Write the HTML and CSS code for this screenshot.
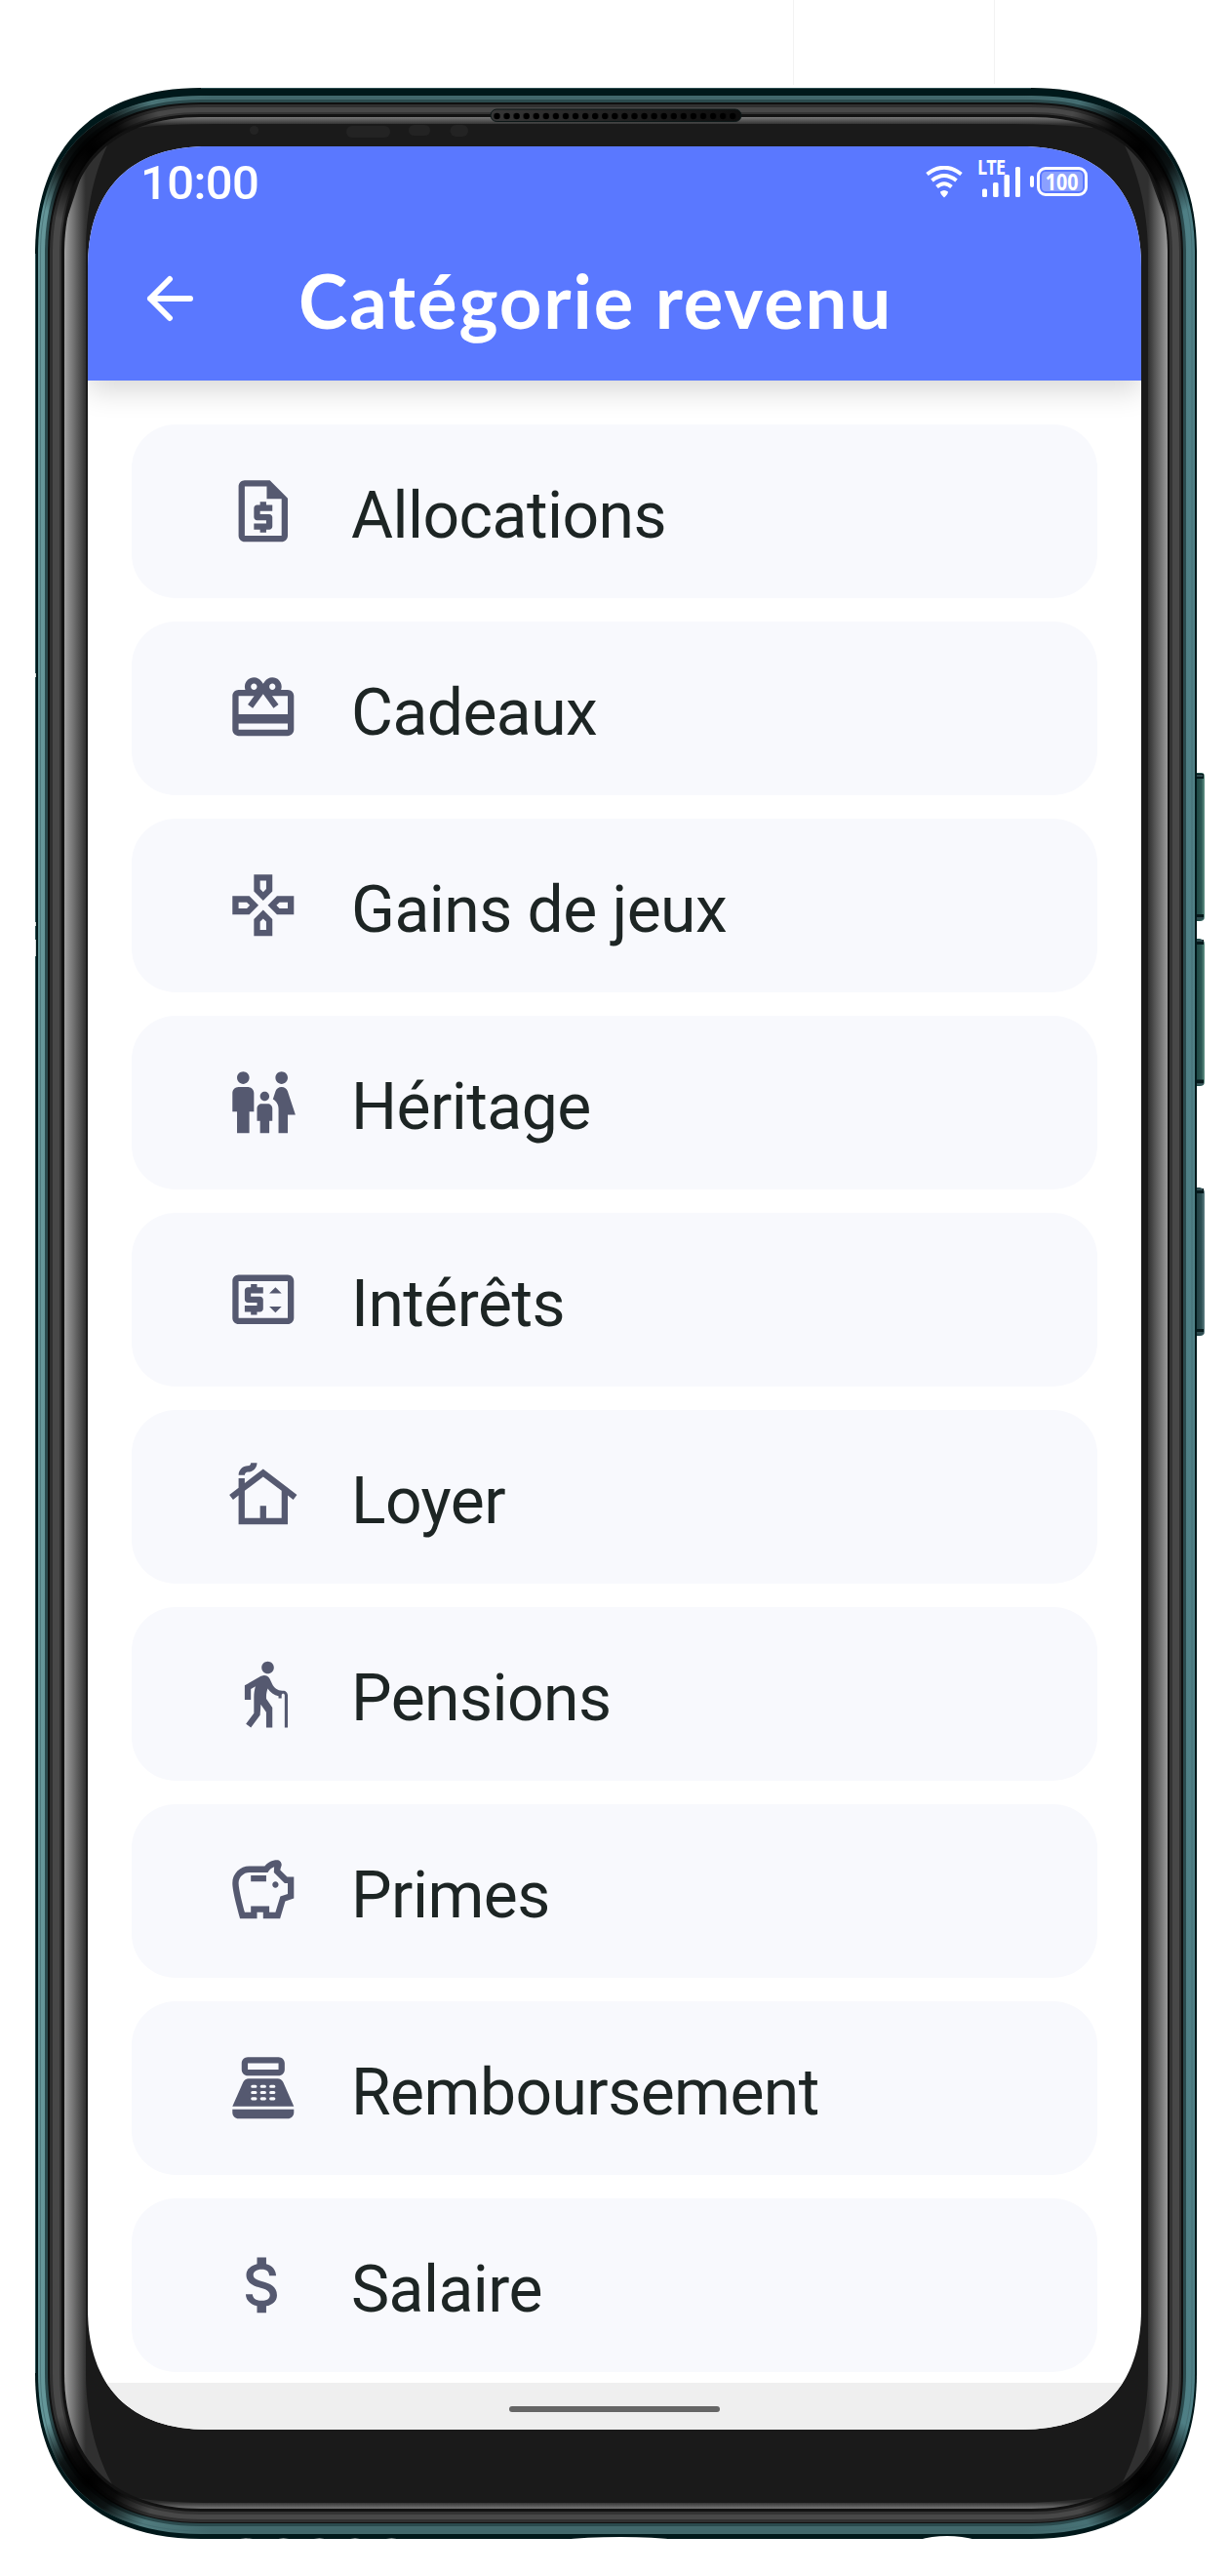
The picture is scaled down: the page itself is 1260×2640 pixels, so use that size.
FILE: index.html
```html
<!DOCTYPE html>
<html lang="fr">
<head>
<meta charset="utf-8">
<title>Catégorie revenu</title>
<link rel="stylesheet" href="styles.css">
</head>
<body>
<div class="stage">
  <svg class="device" viewBox="0 0 1260 2640" aria-hidden="true">
    <defs>
      <linearGradient id="tealX" x1="0" x2="1"><stop offset="0" stop-color="#65979a"/><stop offset=".15" stop-color="#42686b"/><stop offset=".85" stop-color="#42686b"/><stop offset="1" stop-color="#4f8086"/></linearGradient>
      <linearGradient id="glassL" gradientUnits="userSpaceOnUse" x1="66" x2="88" y1="0" y2="0"><stop offset="0" stop-color="#a2a2a2"/><stop offset="1" stop-color="#303030"/></linearGradient>
      <linearGradient id="glassR" gradientUnits="userSpaceOnUse" x1="1177" x2="1198" y1="0" y2="0"><stop offset="0" stop-color="#303030"/><stop offset="1" stop-color="#a0a0a0"/></linearGradient>
      <linearGradient id="glassT" gradientUnits="userSpaceOnUse" x1="0" x2="0" y1="120" y2="128"><stop offset="0" stop-color="#777"/><stop offset="1" stop-color="#2b2b2b"/></linearGradient>
      <linearGradient id="glassB" gradientUnits="userSpaceOnUse" x1="0" x2="0" y1="2564" y2="2571"><stop offset="0" stop-color="#2b2b2b"/><stop offset="1" stop-color="#777"/></linearGradient>
      <linearGradient id="speaker" x1="0" x2="1"><stop offset="0" stop-color="#363636"/><stop offset="1" stop-color="#0d0d0d"/></linearGradient>
      <linearGradient id="keyA" x1="0" x2="1"><stop offset="0" stop-color="#1c4542"/><stop offset=".65" stop-color="#2c5954"/><stop offset="1" stop-color="#67978a"/></linearGradient>
      <linearGradient id="keyB" x1="0" x2="1"><stop offset="0" stop-color="#203d40"/><stop offset=".65" stop-color="#2d5054"/><stop offset="1" stop-color="#648387"/></linearGradient>
      <radialGradient id="shade"><stop offset="0" stop-color="#000"/><stop offset=".45" stop-color="#000" stop-opacity=".85"/><stop offset="1" stop-color="#000" stop-opacity="0"/></radialGradient>
      <clipPath id="bodyClip"><path d="M39 260C39 156 99 98 206 98H1057C1165 98 1225 156 1225 260V2432C1225 2538 1165 2597 1057 2597H206C99 2597 39 2538 39 2432Z"/></clipPath>
      <clipPath id="glassClip"><path d="M66 260C66 170 116 120 206 120H1057C1147 120 1197 170 1197 260V2432C1197 2521 1147 2571 1057 2571H206C116 2571 66 2521 66 2432Z"/></clipPath>
      <pattern id="holes" patternUnits="userSpaceOnUse" x="504.5" y="114" width="10.07" height="10"><circle cx="5" cy="5" r="3.2" fill="#000"/></pattern>
    </defs>
    <path d="M813.5 0V87M1019.5 0V86" stroke="#f3f3f3"/>
    <!-- side keys -->
    <g stroke="#071a1c" stroke-width="1">
      <path d="M1226 792H1232Q1235 792 1235 796V940Q1235 944 1230 944H1226Z" fill="url(#keyA)" stroke="none"/>
      <path d="M1226 962H1230Q1235 963 1235 967V1109Q1235 1113 1230 1113H1226Z" fill="url(#keyA)" stroke="none"/>
      <path d="M1226 1217H1230Q1235 1218 1235 1222V1365Q1235 1369 1230 1369H1226Z" fill="url(#keyB)" stroke="none"/>
      <path d="M1227 795.500H1234M1227 939.500H1234M1227 965.500H1234M1227 1109H1234M1227 1220.500H1234M1227 1364.500H1234" stroke-width="5"/>
      <path d="M1227 795H1233M1227 941H1234M1227 964H1233M1227 1111H1234M1227 1219H1233M1227 1366H1234" stroke="#5a7c83"/>
    </g>
    <!-- metal body -->
    <path d="M36 260C36 151 97 90 206 90H1057C1166 90 1227 151 1227 260V2432C1227 2541 1166 2602 1057 2602H206C97 2602 36 2541 36 2432Z" fill="#00181a"/>
    <path d="M36.500 2432V260M206 90.500H1057" stroke="#2f5053"/>
    <path d="M36.500 690V694M36.500 945V949M36.500 963V980" stroke="#d5dada"/>
    <path d="M39 260C39 156 99 98 206 98H1057C1165 98 1225 156 1225 260V2432C1225 2538 1165 2597 1057 2597H206C99 2597 39 2538 39 2432Z" fill="url(#tealX)"/>
    <path d="M41.500 260C41.500 158 101 100 206 100H1057C1163 100 1222 158 1222 260V2432C1222 2536 1163 2594 1057 2594H206C101 2594 41.500 2536 41.500 2432Z" fill="none" stroke="#3f666a" stroke-opacity=".6"/>
    <path d="M46 260C46 159 103 102 206 102H1057C1158 102 1216 159 1216 260V2432C1216 2532 1158 2589 1057 2589H206C103 2589 46 2532 46 2432Z" fill="#2b4a4d"/>
    <path d="M49 260C49 161 106 105 206 105H1057C1156 105 1213 161 1213 260V2432C1213 2530 1156 2586 1057 2586H206C106 2586 49 2530 49 2432Z" fill="#101010"/>
    <path d="M51 260C51 163 107 107 206 107H1057C1155 107 1211 163 1211 260V2432C1211 2529 1155 2585 1057 2585H206C107 2585 51 2529 51 2432Z" fill="#303030"/>
    <path d="M54 260C54 164 109 110 206 110H1057C1153 110 1209 164 1209 260V2432C1209 2527 1153 2582 1057 2582H206C109 2582 54 2527 54 2432Z" fill="#484848"/>
    <path d="M61 260C61 167 113 115 206 115H1057C1150 115 1202 167 1202 260V2432C1202 2525 1150 2577 1057 2577H206C113 2577 61 2525 61 2432Z" fill="#333"/>
    <g clip-path="url(#bodyClip)" fill="url(#shade)">
      <circle cx="94" cy="154" r="78"/><circle cx="1168" cy="154" r="78"/>
      <circle cx="90" cy="2542" r="72"/><circle cx="1172" cy="2542" r="72"/>
    </g>
    <path d="M63 260C63 168 114 117 206 117H1057C1149 117 1199 168 1199 260V2432C1199 2523 1149 2574 1057 2574H206C114 2574 63 2523 63 2432Z" fill="#121212"/>
    <!-- front glass and its reflections -->
    <g clip-path="url(#glassClip)">
      <path d="M60 110H1200V2580H60Z" fill="#1a1a1a"/>
      <path d="M120 110H1140L1120 131Q1080 127 1040 127H220Q170 127 140 131Z" fill="url(#glassT)"/>
      <path d="M120 2580H1140L1120 2560Q1080 2565 1040 2565H220Q170 2565 140 2560Z" fill="url(#glassB)"/>
      <path d="M60 2440V250L100 130L114 141C96 175 88 215 88 260V2432C88 2475 98 2515 115 2546L90 2560Z" fill="url(#glassL)"/>
      <path d="M1204 2440V250L1160 130L1149 141C1167 175 1177 215 1177 260V2432C1177 2475 1167 2515 1148 2549L1172 2560Z" fill="url(#glassR)"/>
    </g>
    <g fill="#232323"><circle cx="260.500" cy="133.500" r="4.600"/><rect x="355" y="129" width="45" height="12" rx="6"/><rect x="419" y="128" width="22" height="11" rx="5.500"/><rect x="461.500" y="128" width="18.500" height="12" rx="6"/></g>
    <rect x="503" y="112" width="257" height="12.500" rx="6.200" fill="url(#speaker)" stroke="#0c1717"/>
    <rect x="504.500" y="114" width="251.700" height="10" fill="url(#holes)"/>
    <g fill="#fff"><path d="M942 2603Q955 2599 971 2599Q986 2599 1001 2603Z"/><path d="M575 2603Q600 2600 636 2600Q670 2600 695 2603Z"/><path d="M240 2603Q252 2600 264 2603ZM280 2603Q290 2600 302 2603ZM316 2603Q328 2600 338 2603ZM354 2603Q364 2600 374 2603ZM390 2603Q402 2600 412 2603Z"/></g>
  </svg>

  <div class="screen">
    <div class="statusbar">
      <span class="clock">10:00</span>
      <div class="signals">
        <svg class="wifi" viewBox="0 0 38 34" fill="none" stroke="#fff" stroke-width="4">
          <path d="M1.500 8.500Q19-5 36.500 8.500M6.500 15Q19 5 31.500 15M11.500 21.500Q19 15 26.500 21.500"/>
          <path d="M15 26.500Q19 23.500 23 26.500Q23 29 19 32.500Q15 29 15 26.500Z" fill="#fff" stroke="none"/>
        </svg>
        <div class="network">
          <svg class="bars" viewBox="0 0 40 31" fill="#fff"><rect y="22.500" width="5" height="8.500" rx="1.500"/><rect x="11" y="16" width="5.500" height="15" rx="1.500"/><rect x="22.500" y="8" width="5.500" height="23" rx="1.500"/><rect x="34" width="5" height="31" rx="1.500"/></svg>
          <span class="lte">LTE</span>
        </div>
        <div class="battery"><span class="nub"></span><span class="cell"><span class="charge"><span class="level">100</span></span></span></div>
      </div>
    </div>
    <header class="appbar">
      <svg class="back" viewBox="0 0 48 48" fill="none" stroke="#fff" stroke-width="6" stroke-linecap="round" stroke-linejoin="round"><path d="M45 24H4M24 4L4 24L24 44"/></svg>
      <h1 class="title">Catégorie revenu</h1>
    </header>

    <main class="list">
      <div class="row"><svg class="icon" viewBox="0 0 24 24"><path d="M14.170 2H6c-1.100 0-2 .9-2 2v16c0 1.100.89 2 2 2h12c1.110 0 2-.9 2-2V7.830L14.170 2zM6 20V4h7.170v4H18v12H6zm5-1h2v-1h1c.55 0 1-.45 1-1v-3c0-.55-.45-1-1-1h-3v-1h4v-2h-2V9h-2v1h-1c-.55 0-1 .45-1 1v3c0 .55.45 1 1 1h3v1H9v2h2v1z"/></svg><span class="label">Allocations</span></div>
      <div class="row"><svg class="icon" viewBox="0 0 24 24"><path d="M20 6h-2.180c.11-.31.18-.65.18-1 0-1.660-1.340-3-3-3-1.050 0-1.960.54-2.500 1.350l-.5.67-.5-.68C10.960 2.540 10.050 2 9 2 7.340 2 6 3.340 6 5c0 .35.07.69.18 1H4c-1.110 0-1.990.89-1.990 2L2 19c0 1.110.89 2 2 2h16c1.110 0 2-.89 2-2V8c0-1.110-.89-2-2-2zm-5-2c.55 0 1 .45 1 1s-.45 1-1 1-1-.45-1-1 .45-1 1-1zM9 4c.55 0 1 .45 1 1s-.45 1-1 1-1-.45-1-1 .45-1 1-1zm11 15H4v-2h16v2zm0-5H4V8h5.080L7 10.830 8.620 12 11 8.760l1-1.360 1 1.360L15.380 12 17 10.830 14.920 8H20v6z"/></svg><span class="label">Cadeaux</span></div>
      <div class="row"><svg class="icon" viewBox="0 0 24 24"><path d="M13 4v2.670l-1 1-1-1V4h2m7 7v2h-2.670l-1-1 1-1H20M6.670 11l1 1-1 1H4v-2h2.670M12 16.330l1 1V20h-2v-2.670l1-1M15 2H9v5.500l3 3 3-3V2zm7 7h-5.500l-3 3 3 3H22V9zM7.500 9H2v6h5.500l3-3-3-3zm4.500 4.500l-3 3V22h6v-5.500l-3-3z"/></svg><span class="label">Gains de jeux</span></div>
      <div class="row"><svg class="icon" viewBox="0 0 24 24"><path d="M16 4c0-1.110.89-2 2-2s2 .89 2 2-.89 2-2 2-2-.89-2-2zm4 18v-6h2.500l-2.540-7.630C19.680 7.550 18.920 7 18.060 7h-.12c-.86 0-1.630.55-1.900 1.370l-.86 2.580c1.080.6 1.820 1.730 1.820 3.050v8h3zm-7.500-10.500c.83 0 1.500-.67 1.500-1.500s-.67-1.500-1.500-1.500S11 9.170 11 10s.67 1.500 1.500 1.500zM5.500 6c1.110 0 2-.89 2-2s-.89-2-2-2-2 .89-2 2 .89 2 2 2zm2 16v-7H9V9c0-1.100-.9-2-2-2H4c-1.100 0-2 .9-2 2v6h1.500v7h4zm6.500 0v-4h1v-4c0-.82-.68-1.500-1.500-1.500h-2c-.82 0-1.500.68-1.500 1.500v4h1v4h3z"/></svg><span class="label">Héritage</span></div>
      <div class="row"><svg class="icon" viewBox="0 0 24 24"><path d="M20 4H4c-1.110 0-1.990.89-1.990 2L2 18c0 1.110.89 2 2 2h16c1.110 0 2-.89 2-2V6c0-1.110-.89-2-2-2zm0 14H4V6h16v12zM6 16h2v1h2v-1h1c.55 0 1-.45 1-1v-3c0-.55-.45-1-1-1H8v-1h4V8h-2V7H8v1H7c-.55 0-1 .45-1 1v3c0 .55.45 1 1 1h3v1H6v2zm10-8l-2 2h4zm-2 6.250l2 2 2-2z"/></svg><span class="label">Intérêts</span></div>
      <div class="row"><svg class="icon" viewBox="0 0 24 24"><path d="M12 3L6 7.580V6H4v3.110L1 11.400l1.210 1.590L4 11.620V21h16v-9.380l1.790 1.360L23 11.400 12 3zm6 16h-5v-4h-2v4H6v-8.900l6-4.580 6 4.580V19zM10 1c0 1.660-1.340 3-3 3-.55 0-1 .45-1 1H4c0-1.660 1.340-3 3-3 .55 0 1-.45 1-1h2z"/></svg><span class="label">Loyer</span></div>
      <div class="row"><svg class="icon" viewBox="0 0 24 24"><path d="M13.500 5.500c1.100 0 2-.9 2-2s-.9-2-2-2-2 .9-2 2 .9 2 2 2zM20 12.500V23h-1V12.500c0-.28-.22-.5-.5-.5s-.5.22-.5.5v1h-1v-.69c-1.460-.38-2.700-1.290-3.510-2.520-.31.87-.49 1.780-.49 2.710 0 .23.020.46.030.69L15 16.500V23h-2v-5l-1.780-2.540L11 19l-3 4-1.600-1.200L9 18.330V13c0-1.150.18-2.290.5-3.390L8 10.460V14H6V9.300l5.400-3.070v.01c.59-.31 1.320-.33 1.940.03.36.21.63.51.8.85l.79 1.670c.58 1.230 1.820 2.210 3.270 2.210h.3c.83 0 1.500.67 1.500 1.500z"/></svg><span class="label">Pensions</span></div>
      <div class="row"><svg class="icon" viewBox="0 0 24 24"><path fill-rule="evenodd" d="M19.830 7.500l-2.270-2.270c.07-.42.18-.81.32-1.150.08-.18.12-.37.12-.58 0-.83-.67-1.500-1.500-1.500-1.640 0-3.090.79-4 2h-5C4.460 4 2 6.460 2 9.500S4.500 21 4.500 21H10v-2h2v2h5.500l1.680-5.590 2.820-.94V7.500h-2.170zM20 13.030l-2.410.8L16.010 19H14v-2H8v2H6.010C5.400 16.770 4 11.480 4 9.500 4 7.570 5.570 6 7.500 6h6c.4-.8 1.150-1.450 2.100-1.800-.05.6-.1 1.250-.1 1.850L19 9.500h1v3.530zM13 9H8V7h5v2zM16 11c-.55 0-1-.45-1-1s.45-1 1-1 1 .45 1 1-.45 1-1 1z"/></svg><span class="label">Primes</span></div>
      <div class="row"><svg class="icon" viewBox="0 0 24 24"><path d="M17 2H7c-1.100 0-2 .9-2 2v2c0 1.100.9 2 2 2h10c1.100 0 2-.9 2-2V4c0-1.100-.9-2-2-2zm0 4H7V4h10v2zm3 16H4c-1.100 0-2-.9-2-2v-1h20v1c0 1.100-.9 2-2 2zM18.530 10.190C18.210 9.470 17.490 9 16.700 9H7.300c-.79 0-1.510.47-1.830 1.190L2 18h20z"/><path class="keys" d="M8.500 11.500h1m2 0h1m2 0h1M8.500 13.500h1m2 0h1m2 0h1M8.500 15.500h1m2 0h1m2 0h1"/></svg><span class="label">Remboursement</span></div>
      <div class="row"><svg class="icon" viewBox="0 0 24 24"><path d="M11.800 10.900c-2.270-.59-3-1.200-3-2.150 0-1.090 1.010-1.850 2.700-1.850 1.780 0 2.440.85 2.500 2.100h2.210c-.07-1.720-1.120-3.300-3.210-3.810V3h-3v2.160c-1.940.42-3.500 1.680-3.500 3.610 0 2.310 1.910 3.460 4.700 4.130 2.500.6 3 1.480 3 2.410 0 .69-.49 1.790-2.700 1.790-2.060 0-2.870-.92-2.980-2.100h-2.200c.12 2.190 1.760 3.420 3.680 3.830V21h3v-2.150c1.950-.37 3.500-1.500 3.500-3.550 0-2.840-2.430-3.810-4.700-4.400z"/></svg><span class="label">Salaire</span></div>
    </main>
    <div class="navbar"><span class="handle"></span></div>
  </div>
</div>
</body>
</html>
```
FILE: styles.css
```css
* { box-sizing: border-box; }

body {
  margin: 0;
  background: #fff;
  font-family: Roboto, "Liberation Sans", sans-serif;
}

.stage {
  position: relative;
  width: 1260px;
  height: 2640px;
  padding: 150px 90px;
  overflow: hidden;
}

.device {
  position: absolute;
  inset: 0;
  width: 1260px;
  height: 2640px;
}

.screen {
  position: relative;
  display: flex;
  flex-direction: column;
  width: 1080px;
  height: 2340px;
  background: #fff;
  clip-path: path("M0 123C0 44 44 0 123 0H957C1036 0 1080 44 1080 123V2217C1080 2296 1036 2340 957 2340H123C44 2340 0 2296 0 2217Z");
}

.statusbar {
  position: relative;
  z-index: 2;
  display: flex;
  justify-content: space-between;
  flex: none;
  height: 72px;
  padding: 0 55px 0 54px;
  background: #5a78ff;
  color: #fff;
}

.clock {
  padding-top: 9px;
  font-size: 49px;
  font-weight: 500;
  line-height: 58px;
  letter-spacing: -.6px;
}

.signals {
  display: flex;
  align-items: flex-start;
  padding-top: 20px;
}

.wifi {
  width: 38px;
  height: 34px;
}

.network {
  position: relative;
  margin: 1px 9px 0 20px;
}

.bars {
  display: block;
  width: 40px;
  height: 31px;
}

.lte {
  position: absolute;
  left: -5px;
  top: -10px;
  font: 700 21px/20px "Open Sans", sans-serif;
  letter-spacing: -1px;
  transform: scaleX(.86);
  transform-origin: left;
}

.battery {
  display: flex;
  align-items: center;
  gap: 3px;
  padding-top: 1px;
}

.nub {
  width: 4px;
  height: 12px;
  border-radius: 2px;
  background: #fff;
}

.cell {
  display: flex;
  width: 52px;
  height: 30px;
  padding: 2px;
  border: 3px solid #fff;
  border-radius: 9px;
}

.charge {
  display: flex;
  justify-content: center;
  flex: 1;
  border-radius: 4px;
  background: rgba(255, 255, 255, .3);
}

.level {
  flex: none;
  font: 700 24px/20px "Open Sans", sans-serif;
  transform: scaleX(.82);
}

.appbar {
  position: relative;
  z-index: 1;
  display: flex;
  align-items: center;
  flex: none;
  height: 168px;
  padding: 0 60px;
  background: #5a78ff;
  color: #fff;
  box-shadow: 0 10px 28px rgba(0, 0, 0, .16);
}

.back {
  width: 48px;
  height: 48px;
}

.title {
  margin: 4px 0 0 108px;
  font: 700 76px/90px Lato, sans-serif;
  letter-spacing: 1.900px;
  white-space: nowrap;
}

.list {
  display: flex;
  flex-direction: column;
  flex: 1;
  gap: 24px;
  padding: 45px 45px 0;
}

.row {
  display: flex;
  align-items: center;
  flex: none;
  gap: 52px;
  height: 178px;
  padding-left: 97.400px;
  border-radius: 45px;
  background: #f8f9fd;
  color: #1d2524;
}

.icon {
  flex: none;
  width: 75.600px;
  height: 75.600px;
  fill: #555970;
}

.keys {
  fill: none;
  stroke: #f8f9fd;
  stroke-linecap: round;
}

.label {
  padding-top: 9px;
  font-size: 66px;
  line-height: 78px;
  letter-spacing: -.550px;
}

.navbar {
  display: flex;
  align-items: center;
  justify-content: center;
  flex: none;
  height: 48px;
  padding-top: 6px;
  background: #efefef;
}

.handle {
  width: 216px;
  height: 6px;
  border-radius: 3px;
  background: #666;
}
```
